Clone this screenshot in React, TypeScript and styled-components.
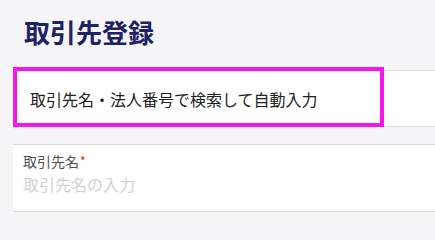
import React from 'react';
import styled, { createGlobalStyle } from 'styled-components';

const GlobalStyle = createGlobalStyle`
    html, body {
        margin: 0;
        padding: 0;
        background: #f5f5f7;
        font-family: 'Noto Sans CJK JP', 'Noto Sans', sans-serif;
    }
`;

const Page = styled.div`
    width: 435px;
    height: 219px;
    overflow: hidden;
    background: #f5f5f7;
`;

const Title = styled.h1`
    margin: 0;
    padding: 13px 0 0 24px;
    height: 57px;
    box-sizing: border-box;
    font-size: 26px;
    line-height: 38px;
    font-weight: 700;
    color: #1d2266;
    letter-spacing: 0;
`;

const Body = styled.div`
    display: flex;
    flex-direction: column;
    gap: 17px;
    padding: 13px 0 0 13px;
`;

const Card = styled.section<{ $height: number }>`
    position: relative;
    height: ${({ $height }) => $height}px;
    box-sizing: border-box;
    background: #fff;
    border-top: 1px solid #dcdcdc;
    border-bottom: 1px solid #dcdcdc;
    margin-right: -20px;
`;

const SearchRow = styled.div`
    display: flex;
    align-items: center;
    height: 100%;
    padding-left: 17px;
    font-size: 16px;
    color: #222;
`;

const Highlight = styled.div`
    position: absolute;
    top: -4px;
    left: 0;
    width: 371px;
    bottom: -1px;
    box-sizing: border-box;
    border: 4px solid #f516ec;
    pointer-events: none;
`;

const Field = styled.div`
    display: flex;
    flex-direction: column;
    padding: 6px 0 0 10px;
`;

const Label = styled.label`
    font-size: 14px;
    line-height: 20px;
    color: #4f4f4f;
`;

const Required = styled.span`
    color: #e8242b;
    font-size: 12px;
    vertical-align: top;
    margin-left: 1px;
`;

const Input = styled.input`
    border: none;
    outline: none;
    padding: 0;
    margin-top: 1px;
    font-family: 'Noto Sans CJK JP', 'Noto Sans', sans-serif;
    font-size: 16px;
    line-height: 24px;
    color: #222;
    background: transparent;

    &::placeholder {
        color: #d2d2d2;
    }
`;

const App: React.FC = () => (
    <Page>
        <GlobalStyle />
        <Title>取引先登録</Title>
        <Body>
            <Card $height={57}>
                <SearchRow>取引先名・法人番号で検索して自動入力</SearchRow>
                <Highlight />
            </Card>
            <Card $height={68}>
                <Field>
                    <Label>
                        取引先名<Required>*</Required>
                    </Label>
                    <Input placeholder="取引先名の入力" />
                </Field>
            </Card>
        </Body>
    </Page>
);

export default App;
